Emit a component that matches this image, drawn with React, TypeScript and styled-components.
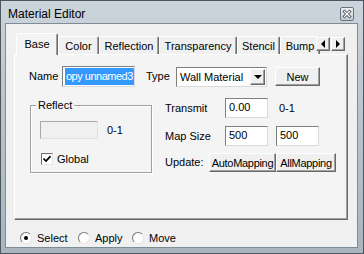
import styled, { createGlobalStyle } from "styled-components";

const GlobalStyle = createGlobalStyle`
  html, body {
    margin: 0;
    padding: 0;
    background: #ffffff;
  }
  body {
    font-family: "Liberation Sans", Arial, sans-serif;
    font-size: 11px;
    color: #000000;
  }
  * {
    box-sizing: border-box;
  }
`;

const tabs = [
  { label: "Base", width: 42 },
  { label: "Color", width: 41 },
  { label: "Reflection", width: 60 },
  { label: "Transparency", width: 78 },
  { label: "Stencil", width: 43 },
  { label: "Bump", width: 40 },
];

const CloseIcon = () => (
  <svg width="14" height="14" viewBox="0 0 14 14">
    <defs>
      <linearGradient id="closeFill" x1="0" y1="0" x2="0" y2="1">
        <stop offset="0" stopColor="#eef1f4" />
        <stop offset="1" stopColor="#c3cbd2" />
      </linearGradient>
    </defs>
    <rect x="0.5" y="0.5" width="13" height="13" rx="1.5" fill="url(#closeFill)" stroke="#67737d" />
    <path d="M4.5 4.5 L9.5 9.5 M9.5 4.5 L4.5 9.5" stroke="#46515a" strokeWidth="3" strokeLinecap="square" />
    <path d="M4.5 4.5 L9.5 9.5 M9.5 4.5 L4.5 9.5" stroke="#ffffff" strokeWidth="1.3" strokeLinecap="square" />
  </svg>
);

const CheckMark = () => (
  <svg width="8" height="8" viewBox="0 0 8 8">
    <path d="M0.5 3.5 L3 6 L7.5 1.2" stroke="#000" strokeWidth="1.7" fill="none" />
  </svg>
);

const App = () => {
  return (
    <>
      <GlobalStyle />
      <Window>
        <TitleBar>
          <Title>Material Editor</Title>
          <CloseButton>
            <CloseIcon />
          </CloseButton>
        </TitleBar>
        <Client>
          <TabControl>
            <TabStrip>
              {tabs.map((tab, i) => (
                <Tab key={tab.label} $w={tab.width} $active={i === 0}>
                  {tab.label}
                </Tab>
              ))}
            </TabStrip>
            <ScrollArrows>
              <ArrowButton>
                <Triangle $dir="left" />
              </ArrowButton>
              <ArrowButton>
                <Triangle $dir="right" />
              </ArrowButton>
            </ScrollArrows>
            <Pane>
              <Row $h={21}>
                <Label $w={33}>Name</Label>
                <NameField>
                  <Selection>opy unnamed3</Selection>
                </NameField>
                <Label $w={30} $ml={11}>
                  Type
                </Label>
                <Select>
                  <SelectText>Wall Material</SelectText>
                  <DropButton>
                    <Triangle $dir="down" />
                  </DropButton>
                </Select>
                <Button $w={45} $h={19} $ml={8}>
                  New
                </Button>
              </Row>
              <Section>
                <GroupBox>
                  <GroupLabel>Reflect</GroupLabel>
                  <Row $h={18}>
                    <Field $w={58} $h={18} $disabled />
                    <Label $ml={9}>0-1</Label>
                  </Row>
                  <Row $h={12} $mt={14}>
                    <CheckBox>
                      <CheckMark />
                    </CheckBox>
                    <Label $ml={4}>Global</Label>
                  </Row>
                </GroupBox>
                <RightColumn>
                  <Row $h={20}>
                    <Label $w={60}>Transmit</Label>
                    <Field $w={43} $h={20}>
                      0.00
                    </Field>
                    <Label $ml={11}>0-1</Label>
                  </Row>
                  <Row $h={20} $mt={8}>
                    <Label $w={60}>Map Size</Label>
                    <Field $w={43} $h={20}>
                      500
                    </Field>
                    <Field $w={43} $h={20} $ml={8}>
                      500
                    </Field>
                  </Row>
                  <Row $h={19} $mt={7}>
                    <Label $w={44}>Update:</Label>
                    <Button $w={67} $h={19} $tight>
                      AutoMapping
                    </Button>
                    <Button $w={60} $h={19} $tight>
                      AllMapping
                    </Button>
                  </Row>
                </RightColumn>
              </Section>
            </Pane>
          </TabControl>
          <RadioRow>
            <RadioItem $w={58}>
              <Radio $checked />
              Select
            </RadioItem>
            <RadioItem $w={54}>
              <Radio />
              Apply
            </RadioItem>
            <RadioItem>
              <Radio />
              Move
            </RadioItem>
          </RadioRow>
        </Client>
      </Window>
    </>
  );
};

export default App;

const Window = styled.div`
  width: 364px;
  height: 254px;
  display: flex;
  flex-direction: column;
  padding: 0 5px 5px 4px;
  border: 1px solid #4b5862;
  background: linear-gradient(#cdd5dc, #bec8d0 30%, #a9b5be);
`;

const TitleBar = styled.div`
  height: 22px;
  display: flex;
  justify-content: space-between;
  align-items: flex-start;
  padding: 0 4px 0 3px;
`;

const Title = styled.div`
  font-size: 12px;
  line-height: 14px;
  margin-top: 6px;
  color: #000000;
`;

const CloseButton = styled.div`
  margin-top: 6px;
  display: flex;
`;

const Client = styled.div`
  flex: 1;
  display: flex;
  flex-direction: column;
  padding: 9px 0 0 8px;
  background: #f0f0f0;
  border: 1px solid #7e8c97;
`;

const TabControl = styled.div`
  position: relative;
  width: 334px;
`;

const TabStrip = styled.div`
  position: relative;
  z-index: 1;
  height: 22px;
  display: flex;
  align-items: flex-end;
  padding-left: 2px;
  overflow: hidden;
`;

const Tab = styled.div<{ $w: number; $active?: boolean }>`
  flex-shrink: 0;
  width: ${({ $w }) => $w}px;
  height: ${({ $active }) => ($active ? 22 : 18)}px;
  margin-bottom: ${({ $active }) => ($active ? 0 : 1)}px;
  display: flex;
  align-items: center;
  justify-content: center;
  padding-bottom: ${({ $active }) => ($active ? 1 : 0)}px;
  white-space: nowrap;
  border: 1px solid;
  border-bottom: none;
  border-color: #ffffff #696969 transparent #ffffff;
  border-radius: 2px 2px 0 0;
  box-shadow: inset -1px 0 0 #a0a0a0;
  background: ${({ $active }) => ($active ? "#f4f4f4" : "#f0f0f0")};
`;

const ScrollArrows = styled.div`
  position: absolute;
  z-index: 2;
  top: 4px;
  left: 301px;
  display: flex;
  gap: 1px;
  padding-left: 1px;
  background: #f0f0f0;
`;

const ArrowButton = styled.div`
  width: 14px;
  height: 14px;
  display: flex;
  align-items: center;
  justify-content: center;
  background: #f0f0f0;
  border: 1px solid;
  border-color: #ffffff #696969 #696969 #ffffff;
  box-shadow: inset -1px -1px 0 #a0a0a0;
`;

const Triangle = styled.span<{ $dir: "left" | "right" | "down" }>`
  width: 0;
  height: 0;
  border-style: solid;
  border-color: transparent;
  ${({ $dir }) =>
    $dir === "left"
      ? "border-width: 4px 4px 4px 0; border-right-color: #000;"
      : $dir === "right"
      ? "border-width: 4px 0 4px 4px; border-left-color: #000;"
      : "border-width: 4px 4px 0 4px; border-top-color: #000;"}
`;

const Pane = styled.div`
  height: 166px;
  margin-top: -1px;
  padding: 11px 0 0 14px;
  background: #f4f4f4;
  border: 1px solid;
  border-color: #ffffff #696969 #696969 #ffffff;
  box-shadow: inset -1px -1px 0 #a0a0a0;
`;

const Row = styled.div<{ $h: number; $mt?: number }>`
  display: flex;
  align-items: center;
  height: ${({ $h }) => $h}px;
  margin-top: ${({ $mt }) => $mt ?? 0}px;
`;

const Label = styled.div<{ $w?: number; $ml?: number }>`
  flex-shrink: 0;
  width: ${({ $w }) => ($w ? `${$w}px` : "auto")};
  margin-left: ${({ $ml }) => $ml ?? 0}px;
  white-space: nowrap;
  line-height: 13px;
`;

const Field = styled.div<{ $w: number; $h: number; $ml?: number; $disabled?: boolean }>`
  flex-shrink: 0;
  width: ${({ $w }) => $w}px;
  height: ${({ $h }) => $h}px;
  margin-left: ${({ $ml }) => $ml ?? 0}px;
  padding: 2px 3px;
  line-height: 13px;
  background: ${({ $disabled }) => ($disabled ? "#f0f0f0" : "#ffffff")};
  border: 1px solid;
  border-color: ${({ $disabled }) =>
    $disabled ? "#a8a8a8 #e2e2e2 #e2e2e2 #a8a8a8" : "#7f7f7f #dadada #dadada #7f7f7f"};
`;

const NameField = styled.div`
  flex-shrink: 0;
  width: 73px;
  height: 21px;
  padding: 1px 0 1px 2px;
  overflow: hidden;
  background: #ffffff;
  border: 1px solid;
  border-color: #7f7f7f #dadada #dadada #7f7f7f;
`;

const Selection = styled.div`
  height: 17px;
  line-height: 17px;
  padding-left: 1px;
  white-space: nowrap;
  letter-spacing: -0.5px;
  background: #3399ff;
  color: #ffffff;
`;

const Select = styled.div`
  flex-shrink: 0;
  width: 91px;
  height: 20px;
  display: flex;
  align-items: center;
  justify-content: space-between;
  padding: 1px;
  background: #ffffff;
  border: 1px solid;
  border-color: #7f7f7f #dadada #dadada #7f7f7f;
`;

const SelectText = styled.span`
  padding-left: 2px;
  white-space: nowrap;
`;

const DropButton = styled.div`
  width: 15px;
  height: 16px;
  display: flex;
  align-items: center;
  justify-content: center;
  background: #f0f0f0;
  border: 1px solid;
  border-color: #ffffff #696969 #696969 #ffffff;
  box-shadow: inset -1px -1px 0 #a0a0a0;
`;

const Button = styled.div<{ $w: number; $h: number; $ml?: number; $tight?: boolean }>`
  flex-shrink: 0;
  width: ${({ $w }) => $w}px;
  height: ${({ $h }) => $h}px;
  margin-left: ${({ $ml }) => $ml ?? 0}px;
  display: flex;
  align-items: center;
  justify-content: center;
  white-space: nowrap;
  letter-spacing: ${({ $tight }) => ($tight ? "-0.3px" : "0")};
  background: #f0f0f0;
  border: 1px solid;
  border-color: #ffffff #696969 #696969 #ffffff;
  box-shadow: inset -1px -1px 0 #a0a0a0;
`;

const Section = styled.div`
  display: flex;
  margin-top: 11px;
`;

const GroupBox = styled.div`
  position: relative;
  width: 122px;
  height: 68px;
  margin: 7px 0 0 1px;
  padding: 15px 0 0 9px;
  border: 1px solid #a0a0a0;
  box-shadow: 1px 1px 0 #ffffff, inset 1px 1px 0 #ffffff;
`;

const GroupLabel = styled.div`
  position: absolute;
  top: -7px;
  left: 5px;
  padding: 0 2px;
  line-height: 13px;
  background: #f4f4f4;
`;

const CheckBox = styled.div`
  flex-shrink: 0;
  width: 12px;
  height: 12px;
  margin-left: 1px;
  display: flex;
  align-items: center;
  justify-content: center;
  background: #ffffff;
  border: 1px solid;
  border-color: #6e6e6e #e4e4e4 #e4e4e4 #6e6e6e;
`;

const RightColumn = styled.div`
  display: flex;
  flex-direction: column;
  margin-left: 13px;
`;

const RadioRow = styled.div`
  display: flex;
  align-items: center;
  height: 14px;
  margin: 11px 0 0 6px;
`;

const RadioItem = styled.div<{ $w?: number }>`
  display: flex;
  align-items: center;
  gap: 5px;
  width: ${({ $w }) => ($w ? `${$w}px` : "auto")};
  line-height: 13px;
`;

const Radio = styled.span<{ $checked?: boolean }>`
  position: relative;
  width: 12px;
  height: 12px;
  border-radius: 50%;
  background: #ffffff;
  border: 1px solid;
  border-color: #7a7a7a #e6e6e6 #e6e6e6 #7a7a7a;

  &::after {
    content: "";
    display: ${({ $checked }) => ($checked ? "block" : "none")};
    position: absolute;
    left: 3px;
    top: 3px;
    width: 4px;
    height: 4px;
    border-radius: 50%;
    background: #000000;
  }
`;
